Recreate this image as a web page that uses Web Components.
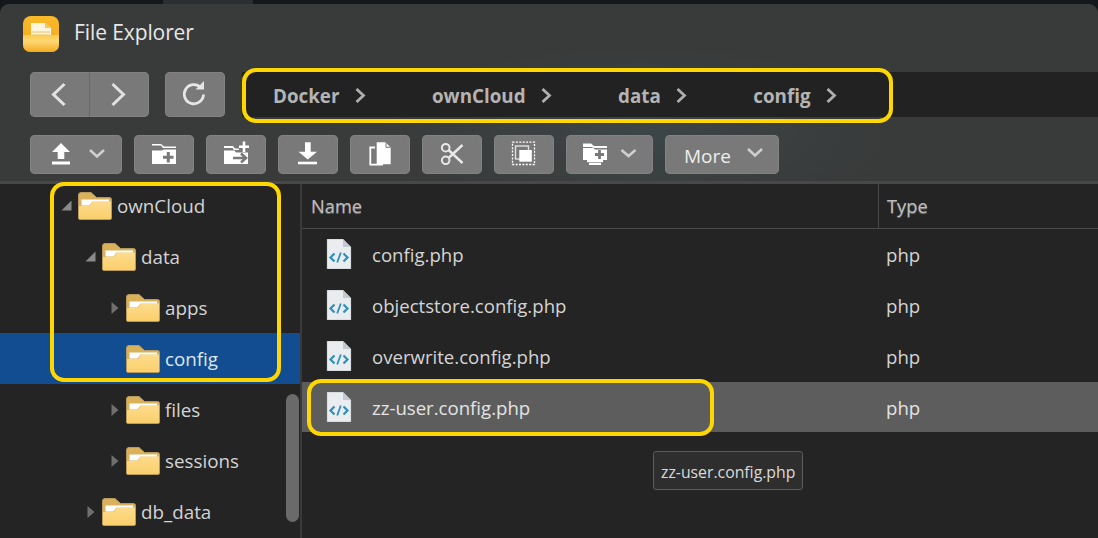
<!DOCTYPE html>
<html lang="en"><head><meta charset="utf-8"><title>File Explorer</title>
<style>
html,body{margin:0;height:100%;overflow:hidden;background:#15181b;font-family:"Open Sans","Noto Sans","Liberation Sans",sans-serif}
</style></head><body>
<fe-app>
  <fe-titlebar slot="title">File Explorer</fe-titlebar>
  <fe-navbar slot="nav">
    <fe-crumb>Docker</fe-crumb><fe-crumb>ownCloud</fe-crumb><fe-crumb>data</fe-crumb><fe-crumb>config</fe-crumb>
  </fe-navbar>
  <fe-toolbar slot="tools"></fe-toolbar>
  <fe-tree slot="tree">
    <fe-tree-row level="0" state="open">ownCloud</fe-tree-row>
    <fe-tree-row level="1" state="open">data</fe-tree-row>
    <fe-tree-row level="2" state="closed">apps</fe-tree-row>
    <fe-tree-row level="2" selected>config</fe-tree-row>
    <fe-tree-row level="2" state="closed">files</fe-tree-row>
    <fe-tree-row level="2" state="closed">sessions</fe-tree-row>
    <fe-tree-row level="1" state="closed">db_data</fe-tree-row>
  </fe-tree>
  <fe-files slot="files">
    <fe-file-row>config.php</fe-file-row>
    <fe-file-row>objectstore.config.php</fe-file-row>
    <fe-file-row>overwrite.config.php</fe-file-row>
    <fe-file-row hover>zz-user.config.php</fe-file-row>
  </fe-files>
  <fe-tooltip slot="over" style="left:653px;top:451px">zz-user.config.php</fe-tooltip>
  <fe-mark slot="over" style="left:242px;top:68px;width:651px;height:55px"></fe-mark>
  <fe-mark slot="over" style="left:50px;top:182px;width:231px;height:200px"></fe-mark>
  <fe-mark slot="over" style="left:307px;top:379px;width:407px;height:57px"></fe-mark>
</fe-app>
<script>
const FOLDER=`<svg width="34" height="28" viewBox="0 0 34 28" aria-hidden="true">
<defs><linearGradient id="g" x1="0" y1="0" x2="0" y2="1"><stop offset="0" stop-color="#fddc8c"/><stop offset="1" stop-color="#fbce6c"/></linearGradient></defs>
<path d="M.5 3Q.5 .5 3 .5H13L18.500 5.500H31.500Q33.500 5.500 33.500 7.500V26Q33.500 27.500 32 27.500H2Q.5 27.500 .5 26Z" fill="#d9b15a" stroke="#b79a5c"/>
<path d="M1 14H12L15 9.500H33V26Q33 27 32 27H2Q1 27 1 26Z" fill="url(#g)"/>
<path d="M3.500 7.500H31V9.500H14.500L11.500 13.500H3.500Z" fill="#fff"/></svg>`;
const FILEICON=`<svg width="26" height="30" viewBox="0 0 26 30" aria-hidden="true">
<path d="M1 0H17L25 8V30H1Z" fill="#e9edf0"/><path d="M17 0L25 8H17Z" fill="#c3c9ce"/><path d="M1 0H17L25 8V30H1Z" fill="none" stroke="#8b8f92" stroke-opacity=".35"/>
<path d="M8.500 14.500L4.500 18.500L8.500 22.500M17.500 14.500L21.500 18.500L17.500 22.500" fill="none" stroke="#2f8fb8" stroke-width="2.200"/>
<path d="M14.800 13.500L11.200 23.500" fill="none" stroke="#2f8fb8" stroke-width="1.800"/></svg>`;
const CHEV=(d)=>`<path d="${d}" fill="none" stroke="#e2e2e2" stroke-width="3"/>`;

function def(name,css,html,extra={}){
  customElements.define(name,class extends HTMLElement{
    constructor(){super();const s=this.attachShadow({mode:'open'});
      s.innerHTML=`<style>${css}</style>${typeof html==='function'?html(this):html}`;}
    connectedCallback(){const s=this.shadowRoot; if(extra.init) extra.init(this,s);}
  });
}

def('fe-app',`
:host{display:block;width:1098px;height:538px;box-sizing:border-box;padding-top:4px;position:relative;overflow:hidden;
 background:linear-gradient(90deg,#14171b 163px,#2b2e33 163px,#2b2e33 253px,#14171b 253px) top/100% 4px no-repeat #14171b}
.win{height:534px;border-radius:9px 9px 0 0;overflow:hidden;display:flex;flex-direction:column;
 background:radial-gradient(ellipse 260px 90px at 640px 130px,#3c4547 0%,#3a3d3d 70%,#393b3b 100%)}
.head{flex:none;height:180px;box-sizing:border-box;display:flex;flex-direction:column;border-bottom:3px solid #484848}
.body{flex:1;min-height:0;display:flex}
.tree{flex:none;width:300px;background:#242424;position:relative;overflow:hidden}
.files{flex:1;min-width:0;background:#242424;border-left:2px solid #3a3a3a;overflow:hidden}
`,`<div class="win"><div class="head"><slot name="title"></slot><slot name="nav"></slot><slot name="tools"></slot></div>
<div class="body"><div class="tree"><slot name="tree"></slot></div><div class="files"><slot name="files"></slot></div></div></div><slot name="over"></slot>`);

def('fe-titlebar',`
:host{display:flex;align-items:center;gap:15px;padding:12px 0 0 23px;height:36px;color:#e6e8e8;font-size:21px}
span{letter-spacing:-.1px;padding-bottom:4px}
`,`<svg width="36" height="36" viewBox="0 0 36 36" aria-hidden="true">
<defs><linearGradient id="a" x1="0" y1="0" x2="0" y2="1"><stop offset="0" stop-color="#f9ba2a"/><stop offset="1" stop-color="#f4a71b"/></linearGradient>
<linearGradient id="b" x1="0" y1="0" x2="0" y2="1"><stop offset="0" stop-color="#fbcb4a"/><stop offset=".35" stop-color="#fdd876"/><stop offset="1" stop-color="#f4aa1e"/></linearGradient></defs>
<rect width="36" height="36" rx="8" fill="url(#a)"/>
<path d="M8 7H22L28 12V22H8Z" fill="#fff6e0"/><path d="M22 7L28 12H22Z" fill="#f4c65e"/>
<path d="M9 16H27M9 19H27" stroke="#f0c060" stroke-width="1"/>
<path d="M0 19H36V28Q36 36 28 36H8Q0 36 0 28Z" fill="url(#b)"/></svg><span><slot></slot></span>`);

const btn=`display:block;background:#797979;border-radius:5px;box-shadow:inset 0 0 0 1px #828282`;
def('fe-navbar',`
:host{display:flex;align-items:center;padding:0 0 0 30px;margin-top:20px;height:45px}
.g{${btn};display:flex;width:119px;height:45px;position:relative}
.g svg{display:block}
.g i{width:1px;background:#696969;height:100%}
.r{${btn};width:60px;height:45px;margin-left:16px}
.crumbs{flex:1;display:flex;align-items:center;gap:66px;height:45px;margin-left:17px;padding-left:31px;background:#222;box-sizing:border-box}
`,`<div class="g"><svg width="59" height="45" viewBox="0 0 59 45" aria-hidden="true">${CHEV('M34.500 12L23.500 22.500L34.500 33')}</svg><i></i>
<svg width="59" height="45" viewBox="0 0 59 45" aria-hidden="true">${CHEV('M22.500 12L33.500 22.500L22.500 33')}</svg></div>
<div class="r"><svg width="60" height="45" viewBox="0 0 60 45" aria-hidden="true"><path d="M35.800 15.500A9.600 9.600 0 1 0 38.500 22.500" fill="none" stroke="#e6e6e6" stroke-width="2.800"/><path d="M30.500 17.500H39V9Z" fill="#e6e6e6"/></svg></div>
<div class="crumbs"><slot></slot></div>`);

def('fe-crumb',`
:host{display:flex;align-items:center;gap:15.500px;font-size:18.800px;font-weight:700;color:#b4b4b4;white-space:nowrap}
span{padding-top:2px}
svg{display:block;margin-top:2px}
`,`<span><slot></slot></span><svg width="11" height="15" viewBox="0 0 11 15" aria-hidden="true"><path d="M1.500 1L8.500 7.500L1.500 14" fill="none" stroke="#aeaeae" stroke-width="2.800"/></svg>`);

const W='#fff', G='#797979', K='#cfcfcf';
const ICONS=[
 [92,`<path d="M31 8L40 17H34.300V24H27.700V17H22Z" fill="${W}"/><rect x="22" y="26.500" width="18" height="3" fill="${W}"/><path d="M60 15L67 21.500L74 15" fill="none" stroke="${K}" stroke-width="2.500"/>`],
 [60,`<path d="M18 9H27L30 11.500H42V13H29L27 10.500H18Z" fill="${W}"/><path d="M18 12V29H42V14.500H30L27.500 15.500H18Z" fill="${W}"/><path d="M34.300 17V27.500M29 22.300H39.500" stroke="${G}" stroke-width="3"/>`],
 [60,`<path d="M18 11H27L29 13.500H33V15H28L26.500 13H18Z" fill="${W}"/><path d="M18 15.500H28.500L30 17.500H42V29H18Z" fill="${W}"/><path d="M38 6.500V17M33 11.700H43" stroke="${W}" stroke-width="2.600"/><path d="M27 23H39M35 18.500L40 23L35 27.500" fill="none" stroke="${G}" stroke-width="2.600"/>`],
 [60,`<path d="M27 7.300H32.700V16.700H39L29.800 24.500L20.500 16.700H27Z" fill="${W}"/><rect x="20" y="26.700" width="19" height="2.600" fill="${W}"/>`],
 [60,`<path d="M26.700 7.300H35.500L40.700 12.500V29.300H26.700Z" fill="${W}"/><path d="M25 12.500H20.300V29.700H33" fill="none" stroke="${W}" stroke-width="1.800"/><path d="M36 7.500V12.300H40.500" fill="none" stroke="${G}" stroke-width="1"/>`],
 [60,`<circle cx="23.700" cy="12.700" r="3.800" fill="none" stroke="#e8e8e8" stroke-width="2"/><circle cx="23.700" cy="25.300" r="3.800" fill="none" stroke="#e8e8e8" stroke-width="2"/><path d="M26.500 15L40.500 28M26.500 23L40.500 10" stroke="#e8e8e8" stroke-width="2.400"/>`],
 [60,`<rect x="18.500" y="7.200" width="22" height="22.300" fill="none" stroke="${W}" stroke-width="1.300" stroke-dasharray="2 1.400"/><rect x="21.500" y="11" width="13" height="13" fill="none" stroke="#e0e0e0" stroke-width="1.400"/><rect x="25.300" y="15" width="12.500" height="11.700" fill="${W}"/>`],
 [87,`<path d="M17 8.500H25L28 11H41V13H28L25.500 12H17Z" fill="${W}"/><path d="M17 13H27.500L29 14.500H41V25H17Z" fill="${W}"/><path d="M33.500 15V24M29 19.500H38" stroke="${G}" stroke-width="2.800"/><rect x="21" y="25" width="16" height="2.200" fill="${W}"/><rect x="23" y="27.800" width="12" height="2.200" fill="${W}"/><path d="M55.500 15L62.500 21L69.500 15" fill="none" stroke="${K}" stroke-width="2.500"/>`],
];
def('fe-toolbar',`
:host{display:flex;gap:12px;padding:0 0 0 30px;margin-top:18px}
.b{${btn};height:39px}
svg{display:block}
.more{${btn};height:39px;width:114px;display:flex;align-items:center;color:#eee;font-size:19px;padding-left:19px;box-sizing:border-box;gap:16px}
.more span{padding-top:3px}
.more svg{margin-top:-3px}
`,`${ICONS.map(([w,p])=>`<div class="b" style="width:${w}px"><svg width="${w}" height="39" viewBox="0 0 ${w} 39" aria-hidden="true">${p}</svg></div>`).join('')}
<div class="more"><span>More</span><svg width="16" height="10" viewBox="0 0 16 10" aria-hidden="true"><path d="M1 1L8 7.500L15 1" fill="none" stroke="${K}" stroke-width="2.500"/></svg></div>`);

def('fe-tree',`
:host{display:block;margin-top:-4px}
.bar{position:absolute;left:286px;top:210px;width:13px;height:128px;border-radius:7px;background:#6a6a6a}
`,`<slot></slot><div class="bar"></div>`);

def('fe-tree-row',`
:host{display:flex;align-items:center;height:51px;box-sizing:border-box;color:#d4d4d4;font-size:18.800px;white-space:nowrap;padding-left:calc(54px + var(--lv)*24px)}
:host([selected]){background:#114d90;color:#dfe6ee}
.tw{width:24px;height:14px;display:flex;align-items:center;justify-content:center;flex:none}
.f{display:block;flex:none;margin-right:5px}
.f svg{display:block}
`,(h)=>{const st=h.getAttribute('state');
 const tw= st==='open'?`<svg width="11" height="11" viewBox="0 0 11 11" aria-hidden="true"><path d="M10.500 .5V10.500H.5Z" fill="#8a8a8a"/></svg>`
 : st==='closed'?`<svg width="8" height="12" viewBox="0 0 8 12" aria-hidden="true" style="margin-left:2px"><path d="M.5 0L7.500 6L.5 12Z" fill="#6f6f6f"/></svg>`:'';
 return `<span class="tw">${tw}</span><span class="f">${FOLDER}</span><span><slot></slot></span>`;},
 {init(h){h.style.setProperty('--lv',h.getAttribute('level')||0);}});

def('fe-files',`
:host{display:block}
.hd{display:flex;height:45px;box-sizing:border-box;border-bottom:1px solid #4a4a4a;font-size:18.300px;color:#bdbdbd;text-shadow:0 1px 1px #777}
.n{width:576px;padding:9px 0 0 9px;box-sizing:border-box}
.t{flex:1;padding:9px 0 0 8px;border-left:1px solid #4a4a4a}
.list{display:flex;flex-direction:column;gap:1px}
`,`<div class="hd"><div class="n">Name</div><div class="t">Type</div></div><div class="list"><slot></slot></div>`);

def('fe-file-row',`
:host{display:flex;align-items:center;height:50px;box-sizing:border-box;color:#d4d4d4;font-size:18.600px}
:host([hover]){background:#5d5d5d;color:#e4e4e4}
svg{display:block;flex:none;margin-left:24px}
.n{width:514px;margin-left:20px;white-space:nowrap}
`,`${FILEICON}<span class="n"><slot></slot></span><span>php</span>`);

def('fe-tooltip',`
:host{position:absolute;display:flex;align-items:center;box-sizing:border-box;height:39px;width:150px;padding:2px 7px 0;background:#2e2e2e;border:1px solid #5c5c5c;border-radius:3px;color:#dadada;font-size:15.800px;white-space:nowrap}
`,`<slot></slot>`);

def('fe-mark',`
:host{position:absolute;box-sizing:border-box;border:4px solid #ffd700;border-radius:14px;pointer-events:none}
`,``);
</script>
</body></html>
